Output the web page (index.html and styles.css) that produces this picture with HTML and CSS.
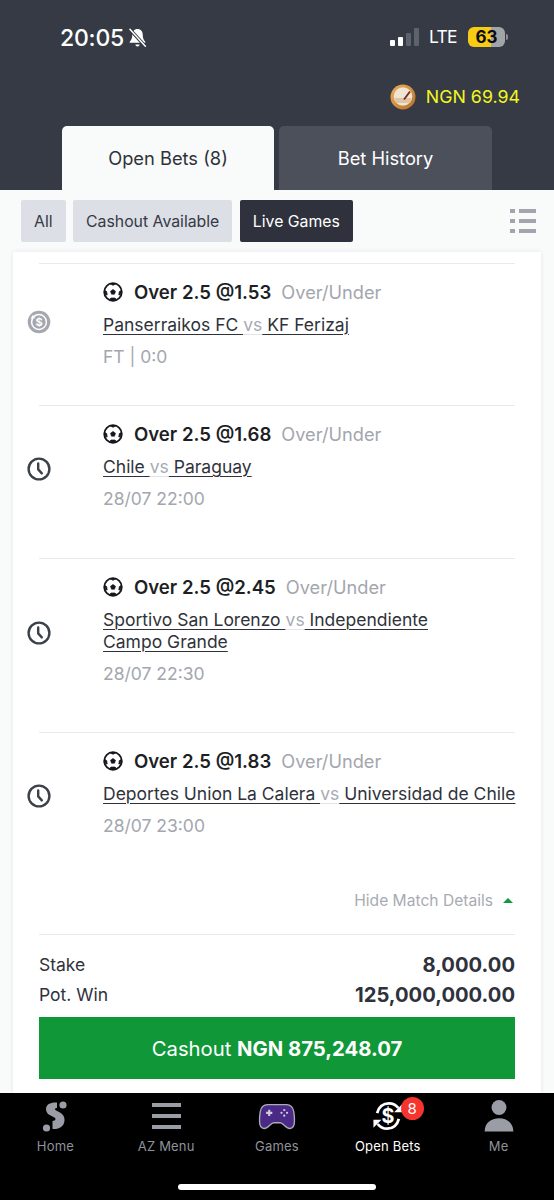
FILE: index.html
```html
<!DOCTYPE html>
<html lang="en">
<head>
<meta charset="utf-8">
<title>Open Bets</title>
<link rel="stylesheet" href="styles.css">
</head>
<body>
<svg class="defs" width="0" height="0" aria-hidden="true">
  <symbol id="ball" viewBox="0 0 20 20">
    <circle cx="10" cy="10" r="8.800" fill="#fff" stroke="#15171c" stroke-width="1.800"/>
    <path d="M10 7.400 12.500 9.200 11.500 12.200H8.500L7.500 9.200Z" fill="#15171c" stroke="#15171c" stroke-linejoin="round" stroke-width=".6"/>
    <path d="M7 1.800 10 3.300 13 1.800ZM1.800 8.600 3.700 9.600 4.200 13 2.400 12.800ZM18.200 8.600 16.300 9.600 15.800 13 17.600 12.800ZM6.500 17.600 8 16H12L13.500 17.600 10 18.500Z" fill="#15171c" stroke="#15171c" stroke-width=".7" stroke-linejoin="round"/>
  </symbol>
  <symbol id="clock" viewBox="0 0 24 24">
    <circle cx="12" cy="12" r="10.400" fill="none" stroke="#3c4049" stroke-width="2.400"/>
    <path d="M11.200 6.400v6l3.600 4" fill="none" stroke="#3c4049" stroke-width="2.400" stroke-linecap="round" stroke-linejoin="round"/>
  </symbol>
</svg>

<header class="top">
  <div class="status">
    <div class="status-left">
      <span class="time">20:05</span>
      <svg class="bell" viewBox="0 0 20 20" aria-hidden="true">
        <path d="M10 1.500c-3.200 0-5 2.400-5 5.400 0 3.600-1 5-2.400 6.600v1h14.800v-1C16 11.900 15 10.500 15 6.900c0-3-1.800-5.400-5-5.400Z" fill="#fff"/>
        <path d="M8 16.200a2 2 0 0 0 4 0Z" fill="#fff"/>
        <path d="M2.500 1.500 17.500 18" stroke="#353a45" stroke-width="3.200"/>
        <path d="M2.800 1.600 17.500 17.800" stroke="#fff" stroke-width="1.400" stroke-linecap="round"/>
      </svg>
    </div>
    <div class="status-right">
      <span class="signal"><i class="bar bar-1"></i><i class="bar bar-2"></i><i class="bar bar-3"></i><i class="bar bar-4"></i></span>
      <span class="lte">LTE</span>
      <span class="battery"><span class="battery-num">63</span></span>
      <i class="battery-tip"></i>
    </div>
  </div>
  <div class="balance">
    <svg class="coin" viewBox="0 0 26 26" aria-hidden="true">
      <defs>
        <linearGradient id="rim" x1="0" y1="0" x2="1" y2="1"><stop offset="0" stop-color="#eeb062"/><stop offset="1" stop-color="#b86f22"/></linearGradient>
      </defs>
      <circle cx="13" cy="13" r="12.500" fill="url(#rim)"/>
      <circle cx="13" cy="12.500" r="9.300" fill="#f0e4d2"/>
      <path d="M4.500 14h17l-1.500 5H6Z" fill="#dcc6a6"/>
      <path d="M14 15.500 20 7.500" stroke="#7a2a22" stroke-width="1.800"/>
    </svg>
    <span class="balance-text">NGN 69.94</span>
  </div>
  <nav class="tabs">
    <a class="tab tab-active">Open Bets (8)</a>
    <a class="tab">Bet History</a>
  </nav>
</header>

<section class="filters">
  <div class="chips">
    <span class="chip">All</span>
    <span class="chip">Cashout Available</span>
    <span class="chip chip-dark">Live Games</span>
  </div>
  <div class="list-icon" aria-hidden="true">
    <i class="li"></i><i class="ll"></i>
    <i class="li"></i><i class="ll"></i>
    <i class="li"></i><i class="ll"></i>
  </div>
</section>

<main class="card">
  <article class="row row-short">
    <div class="row-icon">
      <svg class="status-icon" viewBox="0 0 24 24" aria-hidden="true">
        <circle cx="12" cy="12" r="11.300" fill="#a5a8b0"/>
        <circle cx="12" cy="12" r="7.400" fill="none" stroke="#fff" stroke-width="1.500"/>
        <path d="M3.500 8.500 6 4.800l2 3.500Z" fill="#fff"/>
        <text x="12" y="16" text-anchor="middle" class="dollar">$</text>
      </svg>
    </div>
    <div class="row-body">
      <h3 class="pick"><svg class="ball"><use href="#ball"/></svg><b>Over 2.5 @1.53</b><span class="market">Over/Under</span></h3>
      <p class="teams"><span class="team">Panserraikos FC </span><span class="vs">vs</span><span class="team"> KF Ferizaj</span></p>
      <p class="when">FT | 0:0</p>
    </div>
  </article>

  <article class="row">
    <div class="row-icon"><svg class="status-icon"><use href="#clock"/></svg></div>
    <div class="row-body">
      <h3 class="pick"><svg class="ball"><use href="#ball"/></svg><b>Over 2.5 @1.68</b><span class="market">Over/Under</span></h3>
      <p class="teams"><span class="team">Chile </span><span class="vs">vs</span><span class="team"> Paraguay</span></p>
      <p class="when">28/07 22:00</p>
    </div>
  </article>

  <article class="row row-wrap">
    <div class="row-icon"><svg class="status-icon"><use href="#clock"/></svg></div>
    <div class="row-body">
      <h3 class="pick"><svg class="ball"><use href="#ball"/></svg><b>Over 2.5 @2.45</b><span class="market">Over/Under</span></h3>
      <p class="teams"><span class="team">Sportivo San Lorenzo </span><span class="vs">vs</span><span class="team"> Independiente</span><br><span class="team">Campo Grande</span></p>
      <p class="when">28/07 22:30</p>
    </div>
  </article>

  <article class="row row-last">
    <div class="row-icon"><svg class="status-icon"><use href="#clock"/></svg></div>
    <div class="row-body">
      <h3 class="pick"><svg class="ball"><use href="#ball"/></svg><b>Over 2.5 @1.83</b><span class="market">Over/Under</span></h3>
      <p class="teams"><span class="team">Deportes Union La Calera </span><span class="vs">vs</span><span class="team"> Universidad de Chile</span></p>
      <p class="when">28/07 23:00</p>
    </div>
  </article>

  <div class="details-toggle"><span>Hide Match Details</span><i class="caret"></i></div>

  <div class="summary">
    <div class="sum-line"><span>Stake</span><b>8,000.00</b></div>
    <div class="sum-line"><span>Pot. Win</span><b>125,000,000.00</b></div>
  </div>
  <button class="cashout">Cashout <b>NGN 875,248.07</b></button>
</main>

<footer class="bottom">
  <nav class="nav">
    <a class="nav-item">
      <svg class="nav-icon" viewBox="0 0 30 34" aria-hidden="true">
        <circle cx="23" cy="6" r="3.600" fill="#9a9da6"/>
        <circle cx="6.500" cy="29" r="3.600" fill="#9a9da6"/>
        <path d="M17 3.500c-6-.5-11 1.500-11 6.500 0 4.500 3.500 6 6.500 7.500 2 1 3 1.500 3 2.500 0 1.200-1.500 2-3 2v8c6.500.5 12-2.500 12-9 0-5-3.500-7-6.500-8.500-2-1-3-1.500-3-2.200 0-.8.8-1.300 2-1.300Z" fill="#9a9da6"/>
      </svg>
      <span>Home</span>
    </a>
    <a class="nav-item">
      <span class="burger"><i></i><i></i><i></i></span>
      <span>AZ Menu</span>
    </a>
    <a class="nav-item">
      <svg class="nav-icon nav-icon-wide" viewBox="0 0 36 26" aria-hidden="true">
        <path d="M9 1.500h18c4 0 6.500 2.500 7.200 7 .7 5 .8 9 .3 12-.5 3-3.500 5-6.300 3.500-3-1.600-4.700-5-7.200-5h-6c-2.500 0-4.200 3.400-7.200 5-2.800 1.500-5.800-.5-6.300-3.500-.5-3-.4-7 .3-12C2.500 4 5 1.500 9 1.500Z" fill="#4a2a86" stroke="#a9acb4" stroke-width="1.300"/>
        <path d="M10.500 6.500v6M7.500 9.500h6" stroke="#cfcbe0" stroke-width="2"/>
        <circle cx="25" cy="6.800" r="1.100" fill="#cfcbe0"/><circle cx="25" cy="12.200" r="1.100" fill="#cfcbe0"/>
        <circle cx="22.300" cy="9.500" r="1.100" fill="#cfcbe0"/><circle cx="27.700" cy="9.500" r="1.100" fill="#cfcbe0"/>
      </svg>
      <span>Games</span>
    </a>
    <a class="nav-item nav-item-active">
      <span class="nav-icon-wrap">
        <svg class="nav-icon" viewBox="0 0 34 34" aria-hidden="true">
          <path d="M5.500 14C7 7.500 12 3.500 18 3.500c4 0 7.500 1.800 10 5" fill="none" stroke="#fff" stroke-width="3"/>
          <path d="M32 4.500v8.500h-8.500Z" fill="#fff"/>
          <path d="M28.500 20c-1.500 6.500-6.500 10.500-12.500 10.500-4 0-7.500-1.800-10-5" fill="none" stroke="#fff" stroke-width="3"/>
          <path d="M1.500 29.500V21H10Z" fill="#fff"/>
          <text x="17" y="24" text-anchor="middle" class="nav-dollar">$</text>
        </svg>
        <span class="badge">8</span>
      </span>
      <span>Open Bets</span>
    </a>
    <a class="nav-item">
      <svg class="nav-icon" viewBox="0 0 30 32" aria-hidden="true">
        <circle cx="15" cy="8" r="7" fill="#9a9da6"/>
        <path d="M1.500 30.500c0-8 6-12.500 13.500-12.500s13.500 4.500 13.500 12.500Z" fill="#9a9da6"/>
      </svg>
      <span>Me</span>
    </a>
  </nav>
  <div class="home-pill"></div>
</footer>
</body>
</html>
```
FILE: styles.css
```css
* { box-sizing: border-box; }
html, body { margin: 0; padding: 0; }
body {
  width: 554px;
  height: 1200px;
  overflow: hidden;
  display: flex;
  flex-direction: column;
  background: #f9fafa;
  font-family: Inter, "Liberation Sans", sans-serif;
  color: #2f323b;
}
.defs { position: absolute; }
p, h3 { margin: 0; font-weight: 400; }

/* header */
.top { height: 190px; flex: none; background: #353a45; display: flex; flex-direction: column; }
.status { height: 75px; display: flex; justify-content: space-between; align-items: flex-start; padding: 24px 46px 0 60px; }
.status-left { display: flex; align-items: center; gap: 3px; color: #fff; }
.time { font-size: 23px; line-height: 28px; font-weight: 500; letter-spacing: -.2px; }
.bell { width: 21px; height: 22px; }
.status-right { display: flex; align-items: center; height: 20px; margin-top: 3px; }
.signal { display: flex; align-items: flex-end; gap: 3px; width: 29px; height: 18px; }
.bar { width: 5px; display: block; background: #fff; border-radius: 1px; }
.bar-1 { height: 6px; }
.bar-2 { height: 9px; }
.bar-3 { height: 13px; background: #5e626c; }
.bar-4 { height: 18px; background: #5e626c; }
.lte { font-size: 17.500px; letter-spacing: -.8px; line-height: 20px; color: #fff; margin-left: 10px; width: 39px; }
.battery { width: 37px; height: 20px; border-radius: 6px; background: linear-gradient(90deg, #f8cc15 0 62%, #a3a4a8 62%); display: flex; align-items: center; justify-content: center; }
.battery-num { font-size: 17px; font-weight: 700; color: #0c0c0c; }
.battery-tip { width: 2px; height: 6px; margin-left: 1px; background: #8f9096; border-radius: 0 2px 2px 0; }
.balance { height: 51px; display: flex; justify-content: flex-end; align-items: flex-start; gap: 10px; padding: 9px 34px 0 0; }
.coin { width: 26px; height: 26px; }
.balance-text { font-size: 17.800px; line-height: 26px; color: #f4f71e; }
.tabs { height: 64px; display: flex; gap: 5px; padding-left: 62px; }
.tab { width: 212px; height: 64px; border-radius: 5px 5px 0 0; background: #4c505b; color: #fff; font-size: 18.300px; display: flex; align-items: center; justify-content: center; }
.tab + .tab { width: 213px; }
.tab-active { background: #f9fafa; color: #2f323b; }

/* filters */
.filters { height: 62px; flex: none; display: flex; justify-content: space-between; align-items: flex-start; padding: 10px 18px 0 21px; }
.chips { display: flex; gap: 7.500px; }
.chip { height: 42px; padding: 0 13px; display: flex; align-items: center; background: #dcdfe5; border-radius: 2px; font-size: 15.800px; color: #353a45; }
.chip-dark { background: #2f323d; color: #fff; }
.list-icon { width: 26px; margin-top: 9px; display: grid; grid-template-columns: 5px 17px; gap: 6px 4px; }
.li, .ll { height: 4px; background: #a2a5ae; }

/* card */
.card { flex: 1; min-height: 0; margin: 0 13px; padding: 0 26px; background: #fff; box-shadow: 0 0 4px rgba(40,44,56,.1); overflow: hidden; }
.row { display: flex; padding: 17px 0 48px; border-top: 1px solid #e9eaef; }
.row-short { margin-top: 11px; padding-bottom: 37px; }
.row-wrap { padding-bottom: 47px; }
.row-last { padding-bottom: 0; }
.row-icon { width: 76px; margin-left: -12px; display: flex; align-items: center; flex: none; padding-top: 5px; }
.row-short .row-icon { padding-top: 0; padding-bottom: 5px; }
.status-icon { width: 24px; height: 24px; display: block; }
.dollar { font: 700 11px Inter, sans-serif; fill: #fff; }
.row-body { flex: 1; min-width: 0; }
.pick { display: flex; align-items: center; height: 22px; font-size: 18.200px; line-height: 22px; color: #1d1f25; }
.pick b { font-size: 18.600px; font-weight: 600; margin-left: 11px; }
.ball { width: 20px; height: 20px; flex: none; }
.market { color: #a3a6ae; margin-left: 10px; }
.teams { margin-top: 10.500px; font-size: 17.500px; line-height: 22px; color: #2f323b; white-space: pre; }
.team { text-decoration: underline; text-underline-offset: 3px; text-decoration-thickness: 1px; }
.vs { color: #a8abb3; text-decoration: underline; text-decoration-color: #e3e4e8; text-underline-offset: 3px; }
.when { margin-top: 10.500px; font-size: 17.500px; line-height: 22px; color: #a3a6ae; }

.details-toggle { margin-top: 53px; padding-right: 2px; display: flex; justify-content: flex-end; align-items: center; gap: 10px; height: 20px; font-size: 15.600px; color: #a8abb3; }
.caret { width: 0; height: 0; border-left: 5.500px solid transparent; border-right: 5.500px solid transparent; border-bottom: 5px solid #109a3d; }
.summary { margin-top: 24px; padding-top: 14px; border-top: 1px solid #e9eaef; }
.sum-line { display: flex; justify-content: space-between; align-items: center; height: 30px; font-size: 17.500px; color: #2f323b; }
.sum-line b { font-size: 20.200px; font-weight: 700; }
.cashout { display: block; width: 100%; height: 62px; margin-top: 8px; border: 0; border-radius: 0; background: #109737; color: #fff; font: 400 20.300px Inter, sans-serif; }
.cashout b { font-weight: 700; }

/* bottom nav */
.bottom { height: 107px; flex: none; background: #000; position: relative; }
.nav { display: grid; grid-template-columns: repeat(5, 1fr); }
.nav-item { display: flex; flex-direction: column; align-items: center; font-size: 13px; line-height: 16px; color: #8f929b; letter-spacing: .2px; padding-top: 6px; }
.nav-item-active { color: #fff; }
.nav-icon { width: 32px; height: 34px; display: block; margin-bottom: 5px; }
.nav-icon-wide { width: 38px; height: 27px; margin: 4px 0 8px; }
.nav-icon-wrap { position: relative; display: block; }
.nav-dollar { font: 700 21px Inter, sans-serif; fill: #fff; }
.badge { position: absolute; left: 29px; top: -2px; width: 23px; height: 23px; border-radius: 50%; background: #f7352f; color: #fff; font-size: 15px; line-height: 23px; text-align: center; }
.burger { width: 29px; height: 34px; display: flex; flex-direction: column; justify-content: center; gap: 7px; margin-bottom: 5px; }
.burger i { display: block; height: 4px; background: #9a9da6; }
.home-pill { position: absolute; left: 178px; bottom: 10px; width: 198px; height: 6px; border-radius: 3px; background: #fff; }
```
